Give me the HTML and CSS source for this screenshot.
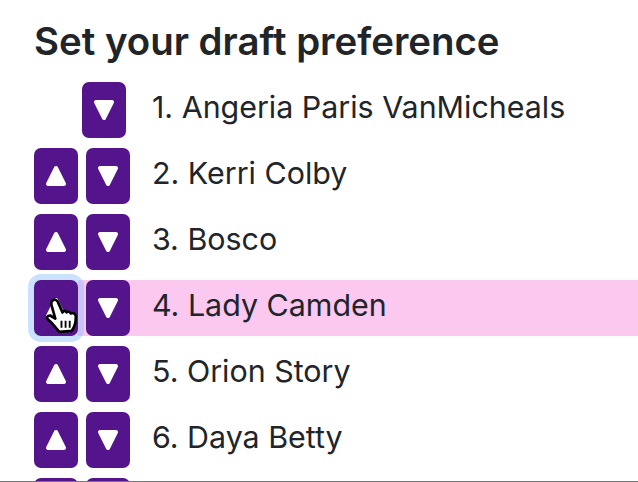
FILE: index.html
```html
<!DOCTYPE html>
<html>
<head>
    <meta charset="utf-8">
    <title>Draft preference</title>
    <link rel="stylesheet" href="styles.css">
</head>
<body>
    <div class="page">
        <h2>Set your draft preference</h2>
        <div class="list">
            <div class="row first">
                <span class="btns">
                    <span class="btn"><svg viewBox="0 0 22 22"><path d="M3 3H19L11 19Z" /></svg></span>
                </span>
                <span class="name">1. Angeria Paris VanMicheals</span>
            </div>
            <div class="row">
                <span class="btns">
                    <span class="btn"><svg viewBox="0 0 22 22"><path d="M3 19H19L11 3Z" /></svg></span>
                    <span class="btn"><svg viewBox="0 0 22 22"><path d="M3 3H19L11 19Z" /></svg></span>
                </span>
                <span class="name">2. Kerri Colby</span>
            </div>
            <div class="row">
                <span class="btns">
                    <span class="btn"><svg viewBox="0 0 22 22"><path d="M3 19H19L11 3Z" /></svg></span>
                    <span class="btn"><svg viewBox="0 0 22 22"><path d="M3 3H19L11 19Z" /></svg></span>
                </span>
                <span class="name">3. Bosco</span>
            </div>
            <div class="row active">
                <span class="btns">
                    <span class="btn focus">
                        <svg viewBox="0 0 22 22"><path d="M3 19H19L11 3Z" /></svg>
                        <svg class="cursor" viewBox="0 0 32 36"><path d="M7 3c2-1 4 0 5 3l4 9c1-2 3-2 4 0 1-1 3-1 4 1 2-1 5 0 5 3 0 6-1 10-4 14l-12 1c-3-3-6-8-11-12-2-2-1-4 2-4l5 3L5 7C5 5 5 4 7 3Z" /><path class="bars" d="M15 23v7M19 23v7M23 23v7" /></svg>
                    </span>
                    <span class="btn"><svg viewBox="0 0 22 22"><path d="M3 3H19L11 19Z" /></svg></span>
                </span>
                <span class="name">4. Lady Camden</span>
            </div>
            <div class="row">
                <span class="btns">
                    <span class="btn"><svg viewBox="0 0 22 22"><path d="M3 19H19L11 3Z" /></svg></span>
                    <span class="btn"><svg viewBox="0 0 22 22"><path d="M3 3H19L11 19Z" /></svg></span>
                </span>
                <span class="name">5. Orion Story</span>
            </div>
            <div class="row">
                <span class="btns">
                    <span class="btn"><svg viewBox="0 0 22 22"><path d="M3 19H19L11 3Z" /></svg></span>
                    <span class="btn"><svg viewBox="0 0 22 22"><path d="M3 3H19L11 19Z" /></svg></span>
                </span>
                <span class="name">6. Daya Betty</span>
            </div>
            <div class="row">
                <span class="btns">
                    <span class="btn"></span>
                    <span class="btn"></span>
                </span>
            </div>
        </div>
    </div>
    <div class="bottom"></div>
</body>
</html>
```

FILE: styles.css
```css
html, body { margin: 0; height: 100%; overflow: hidden; background: #fff; }
body { font-family: Inter, "Liberation Sans", sans-serif; color: #212529; position: relative; }
.page { padding: 18px 0 0 34px; }
h2 { margin: 0 0 18px 0; font-size: 38.4px; line-height: 46px; font-weight: 600; }
.row { display: flex; align-items: center; height: 56px; margin-bottom: 10px; margin-left: 44px; }
.row.active { background: #fbc8f0; }
.btns { display: flex; gap: 8px; width: 96px; margin-left: -44px; margin-right: 22px; flex: none; }
.first .btns { justify-content: flex-end; }
.btn { width: 44px; height: 56px; border-radius: 7px; background: #54148c; display: flex; align-items: center; justify-content: center; position: relative; }
.first .btn { margin-right: 4px; }
.btn svg { width: 22px; height: 22px; fill: #fff; stroke: #fff; stroke-width: 4; stroke-linejoin: round; }
.btn.focus { box-shadow: 0 0 0 6px rgba(140, 190, 255, 0.45); }
.btn svg.cursor { position: absolute; left: 11px; top: 17px; width: 35px; height: 37px; fill: #fff; stroke: #000; stroke-width: 2.6; }
.cursor .bars { fill: none; stroke-width: 1.8; }
.name { font-size: 30.4px; line-height: 36px; margin-bottom: 6px; }
.bottom { position: absolute; left: 0; right: 0; bottom: 0; height: 1px; background: #777; }
```
